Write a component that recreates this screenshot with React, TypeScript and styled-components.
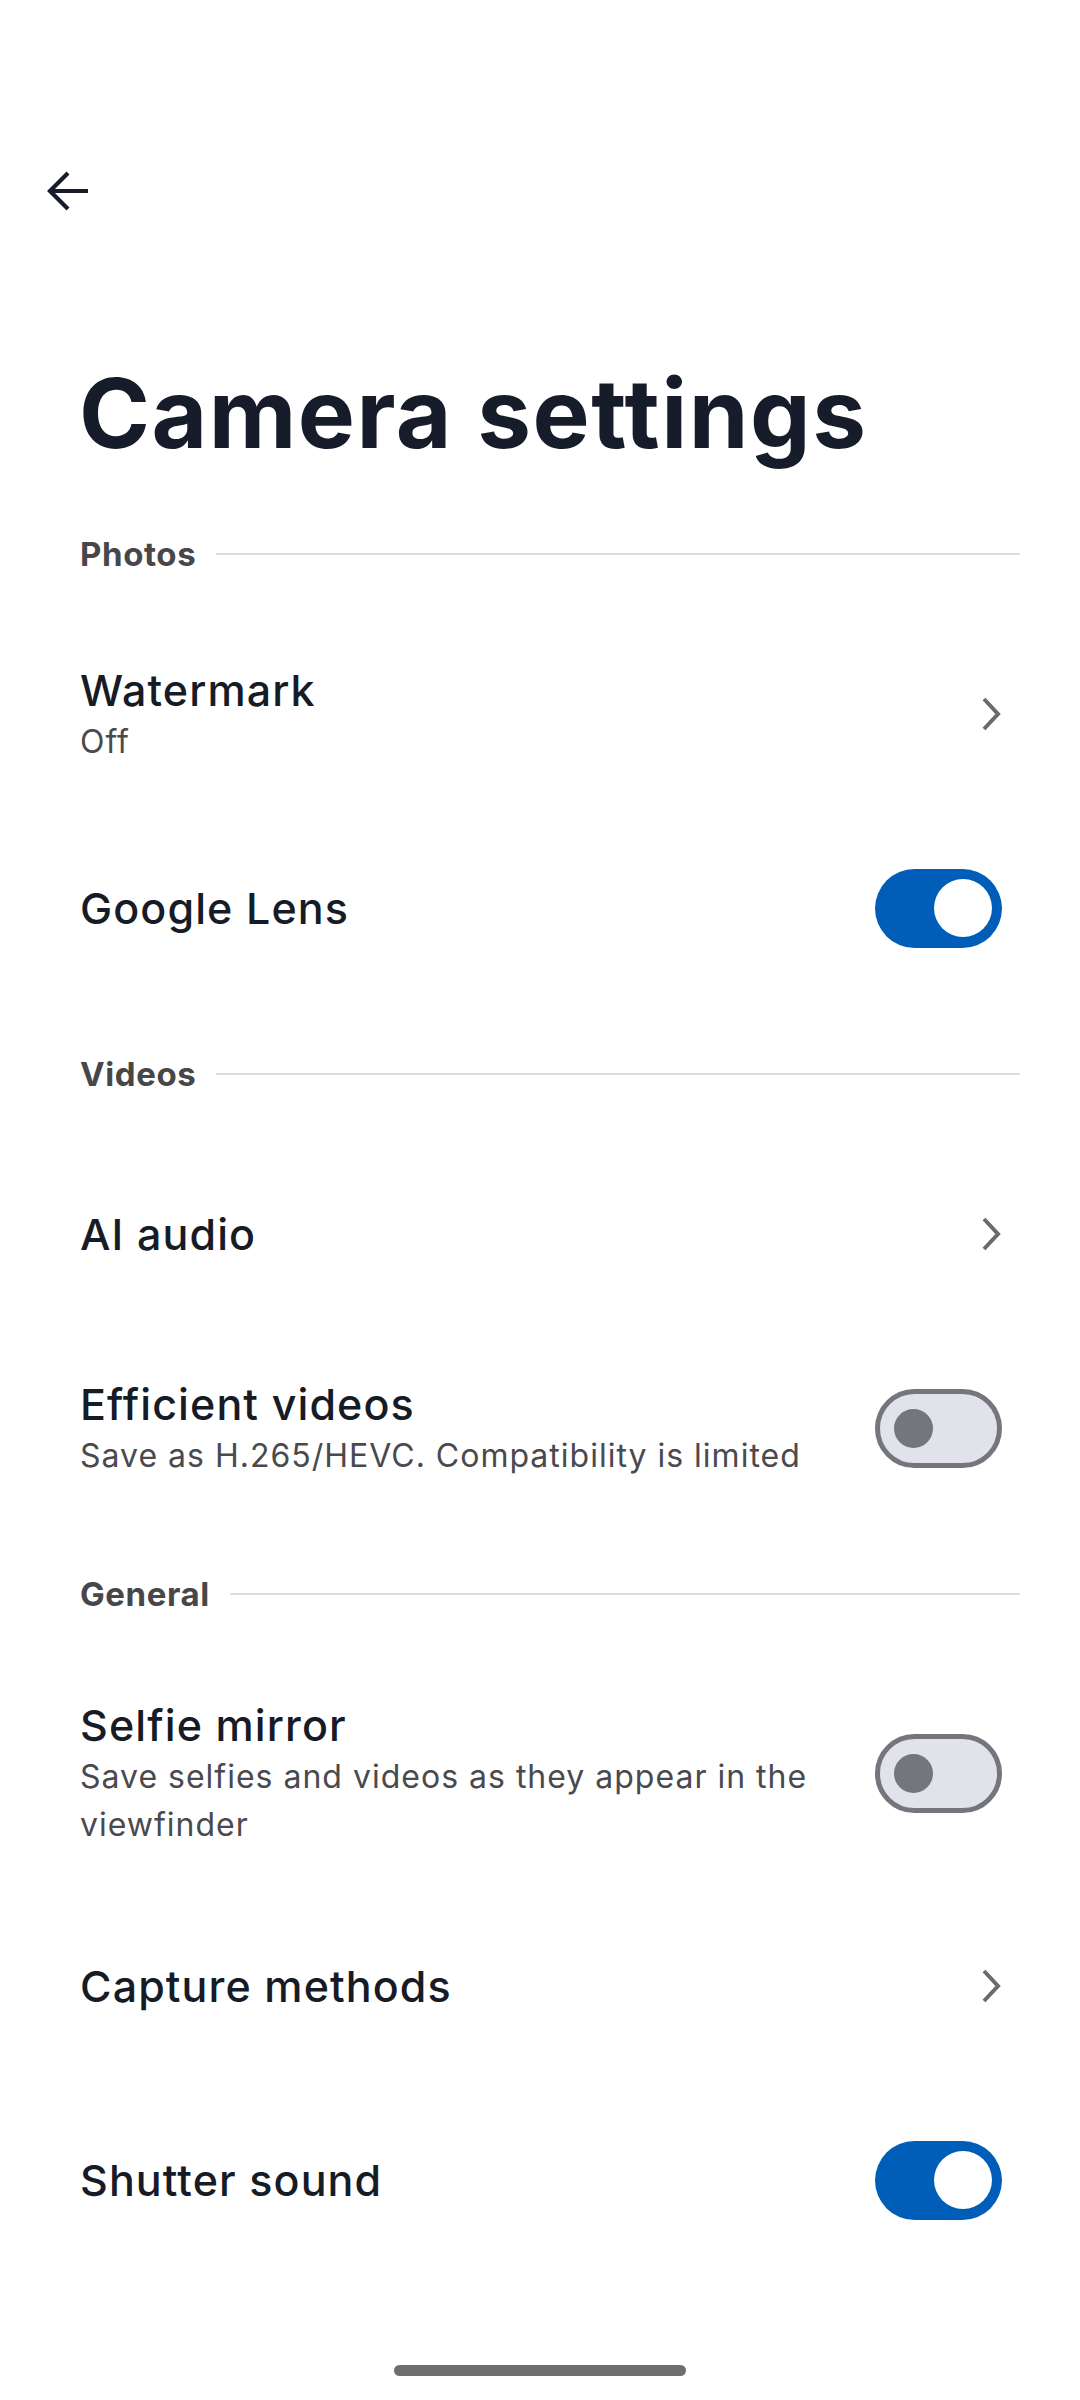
import styled, { createGlobalStyle } from "styled-components";

const GlobalStyle = createGlobalStyle`
  body {
    margin: 0;
    background: #ffffff;
    font-family: Inter, "Noto Sans", sans-serif;
  }
  * {
    box-sizing: border-box;
  }
`;

const Page = styled.div`
  width: 1080px;
  min-height: 2400px;
  display: flex;
  flex-direction: column;
  background: #ffffff;
`;

const TopBar = styled.div`
  padding-top: 150px;
  padding-left: 27px;
  height: 232px;
`;

const BackButton = styled.button`
  width: 82px;
  height: 82px;
  border: none;
  background: transparent;
  padding: 0;
  display: flex;
  align-items: center;
  justify-content: center;
  cursor: pointer;
`;

const Title = styled.h1`
  margin: 133px 0 27px 79px;
  font-size: 96px;
  line-height: 96px;
  font-weight: 700;
  color: #161c2a;
  letter-spacing: 1.5px;
`;

const SectionHeader = styled.div`
  height: 132px;
  display: flex;
  align-items: center;
  gap: 20px;
  padding: 0 60px 0 80px;
`;

const SectionLabel = styled.span`
  font-size: 33px;
  font-weight: 700;
  color: #47474a;
  letter-spacing: 0.6px;
`;

const SectionLine = styled.div`
  flex: 1;
  height: 2px;
  background: #e0dcd6;
`;

const Row = styled.div`
  min-height: 194px;
  padding: 37px 78px 43px 80px;
  display: flex;
  align-items: center;
`;

const RowText = styled.div`
  flex: 1;
  display: flex;
  flex-direction: column;
  margin-right: 50px;
`;

const RowTitle = styled.div`
  font-size: 43px;
  line-height: 56px;
  font-weight: 500;
  color: #161b26;
  letter-spacing: 1.1px;
`;

const RowSub = styled.div`
  font-size: 32px;
  line-height: 48px;
  font-weight: 400;
  color: #4a4a4e;
  letter-spacing: 1px;
`;

const Track = styled.div<{ $on: boolean }>`
  width: 127px;
  height: 79px;
  border-radius: 40px;
  flex-shrink: 0;
  display: flex;
  align-items: center;
  justify-content: ${(p) => (p.$on ? "flex-end" : "flex-start")};
  background: ${(p) => (p.$on ? "#005eb8" : "#e2e2ea")};
  border: ${(p) => (p.$on ? "none" : "5px solid #74757d")};
  padding: ${(p) => (p.$on ? "0 10px" : "0 14px")};
`;

const Knob = styled.div<{ $on: boolean }>`
  width: ${(p) => (p.$on ? "58px" : "39px")};
  height: ${(p) => (p.$on ? "58px" : "39px")};
  border-radius: 50%;
  background: ${(p) => (p.$on ? "#ffffff" : "#74757d")};
`;

const ChevronBox = styled.div`
  width: 40px;
  display: flex;
  justify-content: flex-end;
  flex-shrink: 0;
`;

const HomeBar = styled.div`
  margin: auto auto 24px;
  width: 292px;
  height: 11px;
  border-radius: 6px;
  background: #6e6e6e;
`;

function Toggle({ on }: { on: boolean }) {
  return (
    <Track $on={on}>
      <Knob $on={on} />
    </Track>
  );
}

function Chevron() {
  return (
    <ChevronBox>
      <svg width="22" height="36" viewBox="0 0 22 36">
        <polyline
          points="4,3 18,18 4,33"
          fill="none"
          stroke="#6b6b6b"
          strokeWidth="4"
          strokeLinejoin="miter"
        />
      </svg>
    </ChevronBox>
  );
}

type Item = {
  title: string;
  sub?: string;
  toggle?: boolean;
};

type Section = { label: string; items: Item[] };

const sections: Section[] = [
  {
    label: "Photos",
    items: [{ title: "Watermark", sub: "Off" }, { title: "Google Lens", toggle: true }],
  },
  {
    label: "Videos",
    items: [
      { title: "AI audio" },
      { title: "Efficient videos", sub: "Save as H.265/HEVC. Compatibility is limited", toggle: false },
    ],
  },
  {
    label: "General",
    items: [
      {
        title: "Selfie mirror",
        sub: "Save selfies and videos as they appear in the viewfinder",
        toggle: false,
      },
      { title: "Capture methods" },
      { title: "Shutter sound", toggle: true },
    ],
  },
];

export default function App() {
  return (
    <>
      <GlobalStyle />
      <Page>
        <TopBar>
          <BackButton aria-label="Back">
            <svg width="44" height="42" viewBox="0 0 44 42">
              <path
                d="M42 21H5M22 3L4 21l18 18"
                fill="none"
                stroke="#161c2a"
                strokeWidth="4.2"
              />
            </svg>
          </BackButton>
        </TopBar>
        <Title>Camera settings</Title>
        {sections.map((s) => (
          <div key={s.label}>
            <SectionHeader>
              <SectionLabel>{s.label}</SectionLabel>
              <SectionLine />
            </SectionHeader>
            {s.items.map((it) => (
              <Row key={it.title}>
                <RowText>
                  <RowTitle>{it.title}</RowTitle>
                  {it.sub && <RowSub>{it.sub}</RowSub>}
                </RowText>
                {it.toggle === undefined ? <Chevron /> : <Toggle on={it.toggle} />}
              </Row>
            ))}
          </div>
        ))}
        <HomeBar />
      </Page>
    </>
  );
}
